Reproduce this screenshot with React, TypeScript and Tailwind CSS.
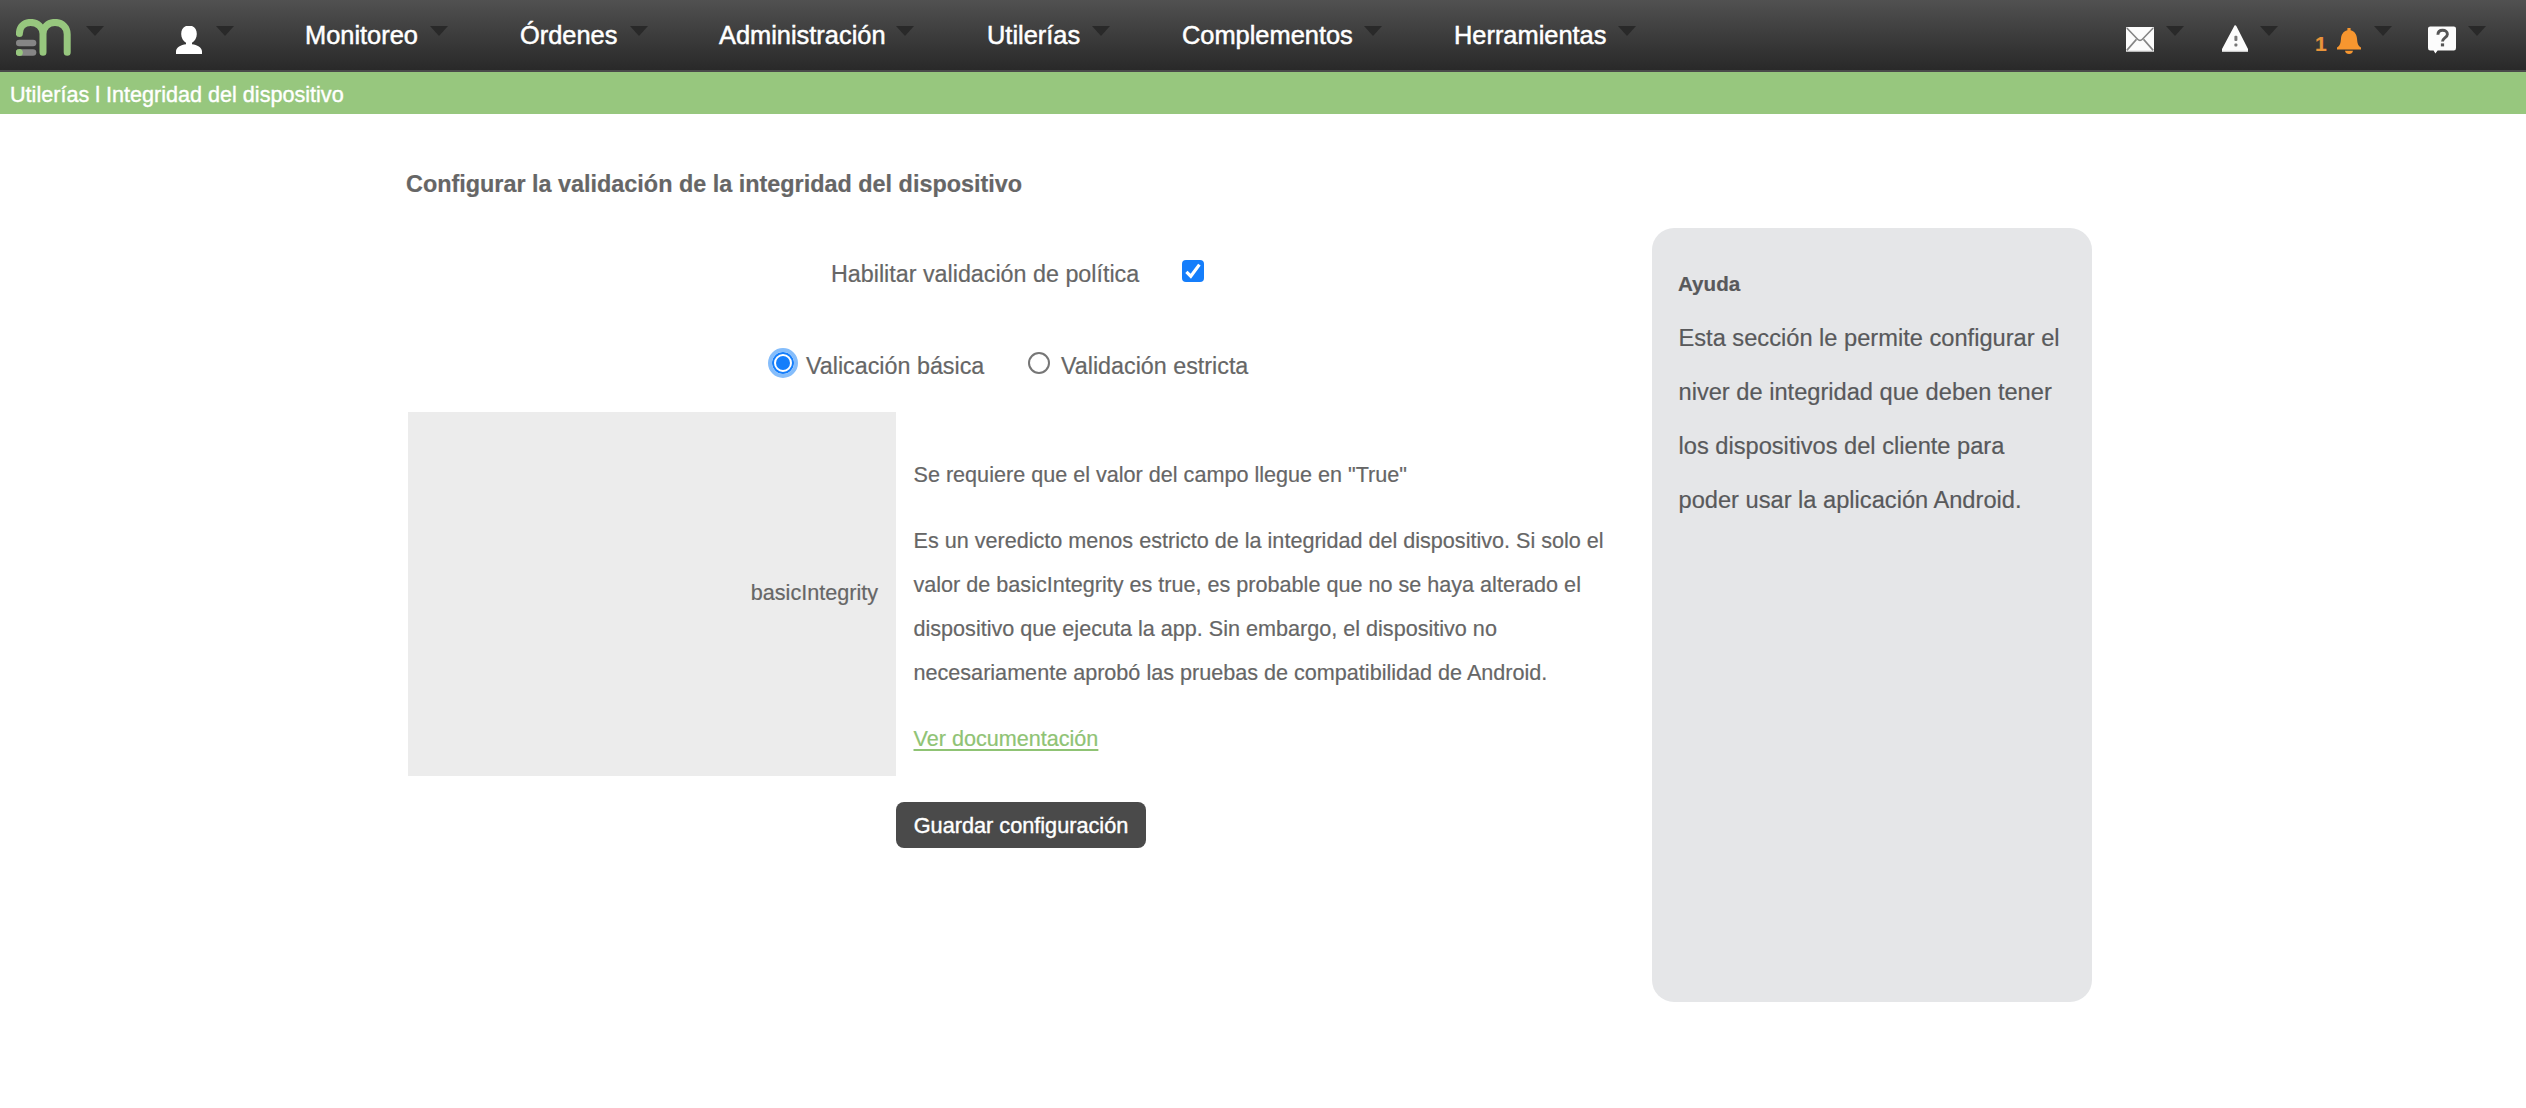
import type { ReactNode } from "react";

function Arrow({ className = "" }: { className?: string }) {
  return (
    <svg className={`mt-[26px] block h-[10px] w-[18px] shrink-0 ${className}`} viewBox="0 0 18 10">
      <path d="M0 0H18L9 10Z" fill="#292929" />
    </svg>
  );
}

function MenuItem({ label, width, gap }: { label: string; width: string; gap: string }) {
  return (
    <div className={`flex shrink-0 ${gap}`}>
      <span className={`mt-[19px] shrink-0 whitespace-nowrap pl-px text-[25.4px] leading-8 text-white [-webkit-text-stroke:0.5px_white] ${width}`}>
        {label}
      </span>
      <Arrow />
    </div>
  );
}

function Logo() {
  return (
    <svg className="ml-4 mt-[19px] block h-[37px] w-[55px] shrink-0" viewBox="0 0 55 37" fill="none">
      <rect x="0" y="20.8" width="20.3" height="6.4" rx="3.2" fill="#868686" />
      <rect x="0" y="30.2" width="20.3" height="6.6" rx="3.3" fill="#868686" />
      <circle cx="3.3" cy="33.5" r="3.5" fill="#97c77e" />
      <path
        d="M3.4 14.6C3.4 8 8 3.4 14.6 3.4C21.5 3.4 27 8.5 27 15V33.2M27 15C27 8.5 32 3.4 39 3.4C46 3.4 51.2 8.5 51.2 15.2V33.2"
        stroke="#97c77e"
        strokeWidth="7"
        strokeLinecap="round"
      />
    </svg>
  );
}

function UserIcon() {
  return (
    <svg className="ml-[72px] mt-[26px] block h-7 w-[26px] shrink-0" viewBox="0 0 26 28" fill="#fff">
      <path d="M10 0H16C19.2 1.2 20.8 4 20.8 8C20.8 12 18.8 15 16 16.8V18.2C21 18.8 26 21 26 25.6V28H0V25.6C0 21 5 18.8 10 18.2V16.8C7.2 15 5.2 12 5.2 8C5.2 4 6.8 1.2 10 0Z" />
    </svg>
  );
}

function MailIcon() {
  return (
    <svg className="mt-[27px] block h-[25px] w-7 shrink-0" viewBox="0 0 28 25" fill="none">
      <rect width="28" height="25" rx="1" fill="#fcfcfc" />
      <path d="M0.8 1L11.6 12.2Q14 14.6 16.4 12.2L27.2 1M0.8 23.4L10.4 12.4M27.2 23.4L17.6 12.4" stroke="#858585" strokeWidth="1.6" />
      <path d="M0.5 24.3H27.5" stroke="#a8a8a8" strokeWidth="1" />
    </svg>
  );
}

function WarningIcon() {
  return (
    <svg className="mt-[25px] block h-[27px] w-[26px] shrink-0" viewBox="0 0 26 27">
      <path d="M12.8 0.3Q13.8 0 14.6 1.4L26 24V27H0V24L12 1.4Q12.4 0.5 12.8 0.3Z" fill="#fcfcfc" />
      <path d="M0 26.4H26" stroke="#c9c9c9" strokeWidth="1.2" />
      <rect x="12.4" y="10.8" width="3" height="5.2" rx="1" fill="#777" />
      <rect x="12.4" y="18.4" width="3" height="3" rx="1" fill="#777" />
    </svg>
  );
}

function BellIcon() {
  return (
    <svg className="ml-[13px] mt-7 block h-[26px] w-6 shrink-0" viewBox="0 0 24 26" fill="#f7962f">
      <path d="M10.4 0H13.6V2.2C18 3.4 19.6 6.6 20 10.5C20.3 15 20.8 17.6 24 19.4V21.4H0V19.4C3.2 17.6 3.7 15 4 10.5C4.4 6.6 6 3.4 10.4 2.2Z" />
      <path d="M8 22.8H16C15.6 25 14 26 12 26C10 26 8.4 25 8 22.8Z" />
    </svg>
  );
}

function HelpIcon() {
  return (
    <svg className="mt-[26px] block h-[28px] w-7 shrink-0" viewBox="0 0 28 28" fill="none">
      <path d="M2.2 0.4H25.8Q28 0.4 28 2.6V22Q28 24.6 25.8 24.6H9.6L7.4 27.4L5.6 24.6H2.2Q0 24.6 0 22V2.6Q0 0.4 2.2 0.4Z" fill="#fcfcfc" />
      <path d="M9.9 8.8C10 5.6 12 4.3 14.6 4.3C17.4 4.3 19.4 5.9 19.4 8.2C19.4 11.6 14.5 11.6 14.5 15.6" stroke="#555" strokeWidth="2.9" />
      <rect x="12.9" y="17.4" width="3.2" height="3" fill="#555" />
    </svg>
  );
}

function StatusItem({ children, gap }: { children: ReactNode; gap: string }) {
  return (
    <div className={`flex shrink-0 ${gap}`}>
      {children}
      <Arrow className="ml-3" />
    </div>
  );
}

export default function App() {
  return (
    <div className="min-h-[1108px] w-[2526px] overflow-hidden bg-white font-['Liberation_Sans',Arial,sans-serif] text-[#666] [-webkit-text-stroke:0.2px_currentColor]">
      <header className="flex h-[72px] items-start border-b-2 border-[#4a4a4a] bg-linear-to-b from-[#515151] to-[#292929]">
        <Logo />
        <Arrow className="ml-[15px]" />
        <UserIcon />
        <Arrow className="ml-[14px]" />
        <nav className="flex">
          <MenuItem label="Monitoreo" width="w-[126px]" gap="ml-[70px]" />
          <MenuItem label="Órdenes" width="w-[111px]" gap="ml-[71px]" />
          <MenuItem label="Administración" width="w-[178px]" gap="ml-[70px]" />
          <MenuItem label="Utilerías" width="w-[106px]" gap="ml-[72px]" />
          <MenuItem label="Complementos" width="w-[183px]" gap="ml-[71px]" />
          <MenuItem label="Herramientas" width="w-[165px]" gap="ml-[71px]" />
        </nav>
        <div className="ml-[490px] flex">
          <StatusItem gap=""><MailIcon /></StatusItem>
          <StatusItem gap="ml-[38px]"><WarningIcon /></StatusItem>
          <div className="ml-[36px] flex shrink-0">
            <span className="mt-[32px] w-[10px] pl-px text-[21px] font-bold leading-6 text-[#e8943a]">1</span>
            <BellIcon />
            <Arrow className="ml-[13px]" />
          </div>
          <StatusItem gap="ml-9"><HelpIcon /></StatusItem>
        </div>
      </header>

      <div className="h-[42px] bg-[#97c77e] pl-[10px] pt-[1.5px] text-[21.6px] leading-[42px] text-white [-webkit-text-stroke:0.4px_white]">
        Utilerías l Integridad del dispositivo
      </div>

      <main className="flex pl-[405px]">
        <section className="w-[1247px] shrink-0 pt-[54px]">
          <h1 className="pl-px text-[23.4px] font-bold leading-8">Configurar la validación de la integridad del dispositivo</h1>

          <label className="ml-[426px] mt-[58px] flex h-8 items-start text-[23.3px] leading-8">
            <span className="w-[351px]">Habilitar validación de política</span>
            <input type="checkbox" defaultChecked className="peer sr-only" />
            <span className="mt-[2px] flex size-[22px] items-center justify-center rounded-[4px] bg-[#157efb]">
              <svg className="size-[22px]" viewBox="0 0 22 22" fill="none">
                <path d="M4.4 11.8L8.8 16.2L17.4 4.6" stroke="#fff" strokeWidth="3.2" />
              </svg>
            </span>
          </label>

          <div className="ml-[367px] mt-[60px] flex h-8 items-start text-[23.3px] leading-8">
            <label className="flex w-[256px]">
              <input type="radio" name="mode" defaultChecked className="sr-only" />
              <span className="mr-[12px] mt-[2px] flex size-[22px] shrink-0 items-center justify-center rounded-full border-2 border-[#157efb] bg-white outline-4 outline-[#85bdfb]">
                <span className="size-[14px] shrink-0 rounded-full bg-[#157efb]" />
              </span>
              Valicación básica
            </label>
            <label className="flex">
              <input type="radio" name="mode" className="sr-only" />
              <span className="mr-[11px] mt-[2px] size-[22px] shrink-0 rounded-full border-2 border-[#767676] bg-white" />
              Validación estricta
            </label>
          </div>

          <div className="ml-[3px] mt-[30px] flex h-[364px] text-[21.6px]">
            <div className="flex w-[488px] items-center justify-end bg-[#ececec] pb-[2px] pr-[18px] leading-[44px]">
              basicIntegrity
            </div>
            <div className="flex flex-col gap-[22px] whitespace-nowrap pl-[17.5px] pt-[41px] leading-[44px]">
              <p>Se requiere que el valor del campo llegue en "True"</p>
              <p>
                Es un veredicto menos estricto de la integridad del dispositivo. Si solo el
                <br />
                valor de basicIntegrity es true, es probable que no se haya alterado el
                <br />
                dispositivo que ejecuta la app. Sin embargo, el dispositivo no
                <br />
                necesariamente aprobó las pruebas de compatibilidad de Android.
              </p>
              <a href="#" className="self-start text-[#8fc374] underline decoration-2 underline-offset-[3px]">
                Ver documentación
              </a>
            </div>
          </div>

          <button className="ml-[491px] mt-[26px] block h-[46px] w-[250px] rounded-lg bg-[#4a4a4a] pt-px text-[21.7px] leading-[46px] text-white [-webkit-text-stroke:0.4px_white]">
            Guardar configuración
          </button>
        </section>

        <aside className="mt-[114px] h-[774px] w-[440px] shrink-0 rounded-[22px] bg-[#e5e6e8] pl-[26px] pt-[29px] text-[#58595b]">
          <h2 className="text-[20.6px] font-bold leading-[54px]">Ayuda</h2>
          <p className="whitespace-nowrap pl-[0.5px] text-[23.65px] leading-[54px]">
            Esta sección le permite configurar el
            <br />
            niver de integridad que deben tener
            <br />
            los dispositivos del cliente para
            <br />
            poder usar la aplicación Android.
          </p>
        </aside>
      </main>
    </div>
  );
}
